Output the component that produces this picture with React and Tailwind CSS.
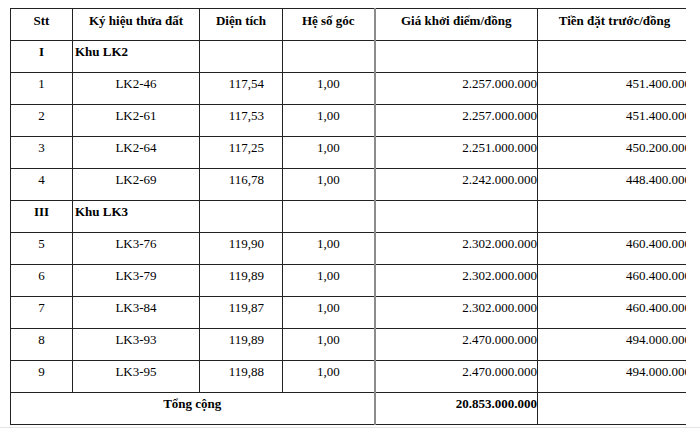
const ROWS = [
  { type: 'group', stt: 'I', name: 'Khu LK2' },
  { stt: '1', code: 'LK2-46', area: '117,54', k: '1,00', price: '2.257.000.000', deposit: '451.400.000' },
  { stt: '2', code: 'LK2-61', area: '117,53', k: '1,00', price: '2.257.000.000', deposit: '451.400.000' },
  { stt: '3', code: 'LK2-64', area: '117,25', k: '1,00', price: '2.251.000.000', deposit: '450.200.000' },
  { stt: '4', code: 'LK2-69', area: '116,78', k: '1,00', price: '2.242.000.000', deposit: '448.400.000' },
  { type: 'group', stt: 'III', name: 'Khu LK3' },
  { stt: '5', code: 'LK3-76', area: '119,90', k: '1,00', price: '2.302.000.000', deposit: '460.400.000' },
  { stt: '6', code: 'LK3-79', area: '119,89', k: '1,00', price: '2.302.000.000', deposit: '460.400.000' },
  { stt: '7', code: 'LK3-84', area: '119,87', k: '1,00', price: '2.302.000.000', deposit: '460.400.000' },
  { stt: '8', code: 'LK3-93', area: '119,89', k: '1,00', price: '2.470.000.000', deposit: '494.000.000' },
  { stt: '9', code: 'LK3-95', area: '119,88', k: '1,00', price: '2.470.000.000', deposit: '494.000.000' },
]

const td = 'h-[32px] border border-[#222] px-[2px] pt-[3px] align-top leading-[16px]'
const gia = 'border-l-2 border-l-[#8c8c8c]'

export default function App() {
  return (
    <div className="h-[432px] w-[700px] overflow-hidden bg-white" style={{ fontFamily: '"Liberation Serif", "Times New Roman", serif' }}>
      <div className="w-[686px] overflow-hidden pl-[10px] pt-[8px]">
        <table className="w-[681px] table-fixed border-collapse text-[13px] text-black">
          <colgroup>
            <col className="w-[62px]" />
            <col className="w-[127px]" />
            <col className="w-[83px]" />
            <col className="w-[92px]" />
            <col className="w-[163px]" />
            <col className="w-[154px]" />
          </colgroup>
          <thead>
            <tr className="font-bold">
              <td className={`${td} pt-[4px] text-center`}>Stt</td>
              <td className={`${td} pt-[4px] text-center`}>Ký hiệu thửa đất</td>
              <td className={`${td} pt-[4px] text-center`}>Diện tích</td>
              <td className={`${td} pt-[4px] text-center`}>Hệ số góc</td>
              <td className={`${td} ${gia} pt-[4px] text-center`}>Giá khởi điểm/đồng</td>
              <td className={`${td} pt-[4px] text-center`}>Tiền đặt trước/đồng</td>
            </tr>
          </thead>
          <tbody>
            {ROWS.map((r, i) =>
              r.type === 'group' ? (
                <tr key={i} className="font-bold">
                  <td className={`${td} text-center`}>{r.stt}</td>
                  <td className={`${td} text-left`}>{r.name}</td>
                  <td className={td}></td>
                  <td className={td}></td>
                  <td className={`${td} ${gia}`}></td>
                  <td className={td}></td>
                </tr>
              ) : (
                <tr key={i}>
                  <td className={`${td} text-center`}>{r.stt}</td>
                  <td className={`${td} text-center`}>{r.code}</td>
                  <td className={`${td} pr-[18px] text-right`}>{r.area}</td>
                  <td className={`${td} text-center`}>{r.k}</td>
                  <td className={`${td} ${gia} pr-0 text-right`}>{r.price}</td>
                  <td className={`${td} pr-0 text-right`}>{r.deposit}</td>
                </tr>
              )
            )}
            <tr className="font-bold">
              <td colSpan={4} className={`${td} text-center`}>Tổng cộng</td>
              <td className={`${td} ${gia} pr-0 text-right`}>20.853.000.000</td>
              <td className={td}></td>
            </tr>
          </tbody>
        </table>
      </div>
      <div className="mt-[2px] border-t border-[#e6e6e6]" />
    </div>
  )
}
